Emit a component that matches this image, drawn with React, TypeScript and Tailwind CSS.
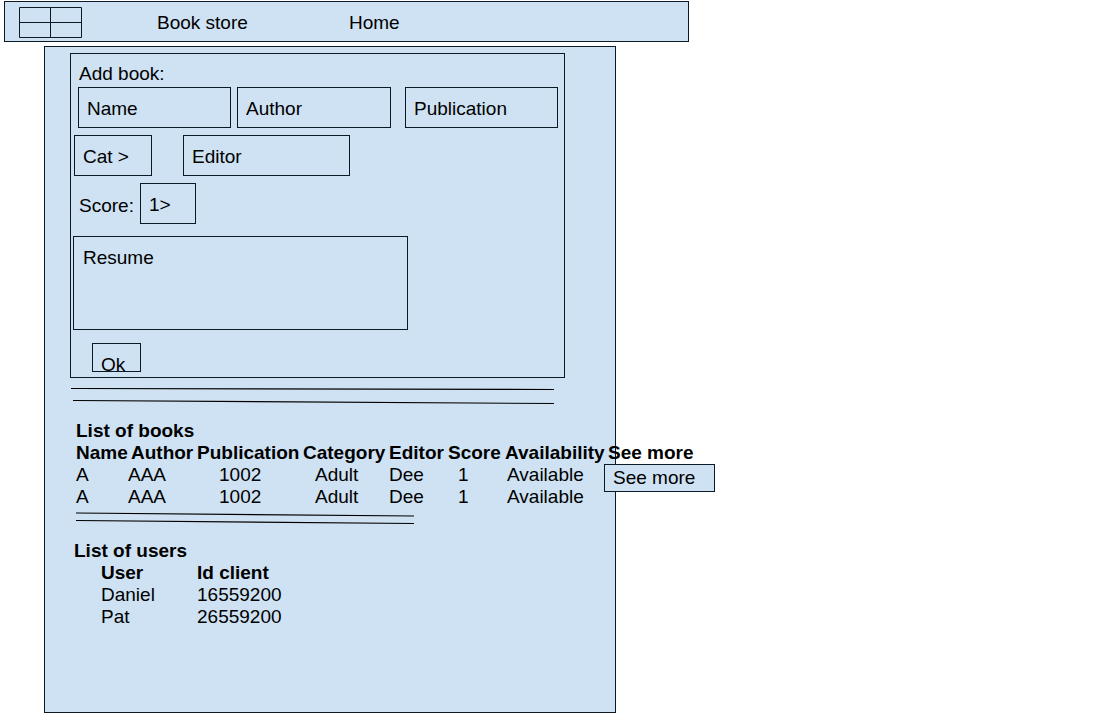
import type { ReactNode } from "react";

const box =
  "appearance-none rounded-none border border-[#0c1a26] bg-[#cfe2f3] text-black placeholder:text-black placeholder:opacity-100 outline-offset-2";

const field = `${box} h-[41px] min-w-0 px-2 pt-0.5`;

function Logo() {
  return (
    <svg
      viewBox="0 0 63 31"
      className="h-[31px] w-[63px] shrink-0"
      fill="none"
      stroke="#0c1a26"
      role="img"
      aria-label="Logo"
    >
      <path d="M.5.5h62v30H.5zM31.5.5v30M.5 15.5h62" />
    </svg>
  );
}

function Rules({ className, viewBox, children }: { className: string; viewBox: string; children: ReactNode }) {
  return (
    <svg viewBox={viewBox} className={className} stroke="#000" strokeWidth="1.1" aria-hidden="true">
      {children}
    </svg>
  );
}

const books = [
  { name: "A", author: "AAA", publication: "1002", category: "Adult", editor: "Dee", score: 1, availability: "Available" },
  { name: "A", author: "AAA", publication: "1002", category: "Adult", editor: "Dee", score: 1, availability: "Available" },
];

const users = [
  { name: "Daniel", id: "16559200" },
  { name: "Pat", id: "26559200" },
];

function AddBook() {
  return (
    <form
      className="max-w-[495px] border border-[#0c1a26] pt-[9px] pb-[5px]"
      onSubmit={(event) => event.preventDefault()}
    >
      <h2 className="pl-2">Add book:</h2>
      <div className="mt-0.5 flex pr-1.5 pl-[7px]">
        <input aria-label="Name" placeholder="Name" className={`${field} w-[153px]`} />
        <input aria-label="Author" placeholder="Author" className={`${field} ml-1.5 w-[154px]`} />
        <input aria-label="Publication" placeholder="Publication" className={`${field} ml-3.5 w-[153px]`} />
      </div>
      <div className="mt-[7px] flex gap-[31px] pl-[3px]">
        <select aria-label="Category" className={`${field} w-[78px]`}>
          <option>Cat &gt;</option>
        </select>
        <input aria-label="Editor" placeholder="Editor" className={`${field} w-[167px]`} />
      </div>
      <div className="mt-[7px] flex items-center pl-2">
        <label htmlFor="score" className="w-[61px] pt-1">
          Score:
        </label>
        <select id="score" className={`${field} w-14`}>
          <option>1&gt;</option>
        </select>
      </div>
      <textarea
        aria-label="Resume"
        placeholder="Resume"
        className={`${box} mt-3 ml-0.5 block h-[94px] w-[335px] max-w-full resize-none px-[9px] py-2.5`}
      />
      <button type="submit" className={`${box} mt-[13px] ml-[21px] block h-[29px] w-[49px] px-2 pt-2.5 text-left leading-[22px]`}>
        Ok
      </button>
    </form>
  );
}

function BookList() {
  return (
    <section className="mt-[15px] pl-[6px]">
      <h2 className="font-bold">List of books</h2>
      <table className="w-[640px] table-fixed text-left">
        <colgroup>
          <col className="w-[52px]" />
          <col className="w-[69px]" />
          <col className="w-[106px]" />
          <col className="w-[86px]" />
          <col className="w-[59px]" />
          <col className="w-[57px]" />
          <col className="w-[99px]" />
          <col className="w-[112px]" />
        </colgroup>
        <thead>
          <tr className="whitespace-nowrap">
            <th className="p-0">Name</th>
            <th className="p-0 pl-[3px]">Author</th>
            <th className="p-0">Publication</th>
            <th className="p-0">Category</th>
            <th className="p-0">Editor</th>
            <th className="p-0">Score</th>
            <th className="p-0">Availability</th>
            <th className="p-0 pl-1">See more</th>
          </tr>
        </thead>
        <tbody>
          {books.map((book, index) => (
            <tr key={index}>
              <td className="p-0">{book.name}</td>
              <td className="p-0">{book.author}</td>
              <td className="p-0 pl-[22px]">{book.publication}</td>
              <td className="p-0 pl-3">{book.category}</td>
              <td className="p-0">{book.editor}</td>
              <td className="p-0 pl-2.5">{book.score}</td>
              <td className="p-0 pl-0.5">{book.availability}</td>
              {index === 0 && (
                <td rowSpan={2} className="p-0 align-top">
                  <button type="button" className={`${box} block h-7 w-[111px] px-2 text-left`}>
                    See more
                  </button>
                </td>
              )}
            </tr>
          ))}
        </tbody>
      </table>
    </section>
  );
}

function UserList() {
  return (
    <section className="mt-[15px] pl-[4px]">
      <h2 className="font-bold">List of users</h2>
      <table className="ml-[27px] text-left">
        <thead>
          <tr>
            <th className="w-24 p-0">User</th>
            <th className="p-0">Id client</th>
          </tr>
        </thead>
        <tbody>
          {users.map((user) => (
            <tr key={user.id}>
              <td className="p-0">{user.name}</td>
              <td className="p-0">{user.id}</td>
            </tr>
          ))}
        </tbody>
      </table>
    </section>
  );
}

export default function App() {
  return (
    <div className="min-h-screen bg-white pt-px pl-1 font-['Liberation_Sans',Arial,sans-serif] text-[19px] leading-[22px] text-black">
      <header className="flex max-w-[685px] items-center border border-[#0c1a26] bg-[#cfe2f3] pt-[5px] pb-[3px] pl-3.5">
        <Logo />
        <nav className="ml-[75px] flex">
          <a href="#" className="w-48">
            Book store
          </a>
          <a href="#home">Home</a>
        </nav>
      </header>
      <main className="mt-1 ml-10 max-w-[572px] border border-[#0c1a26] bg-[#cfe2f3] pt-1.5 pb-[84px] pl-[25px]">
        <AddBook />
        <Rules className="mt-[7px] ml-px h-5 w-[484px]" viewBox="0 0 484 20">
          <path d="M0 3.5L483 4.5M2 15.5L483 18.5" />
        </Rules>
        <BookList />
        <Rules className="mt-[3px] ml-1.5 h-3.5 w-[339px]" viewBox="0 0 339 14">
          <path d="M0 2L338 5M0 9.5L338 12.5" />
        </Rules>
        <UserList />
      </main>
    </div>
  );
}
